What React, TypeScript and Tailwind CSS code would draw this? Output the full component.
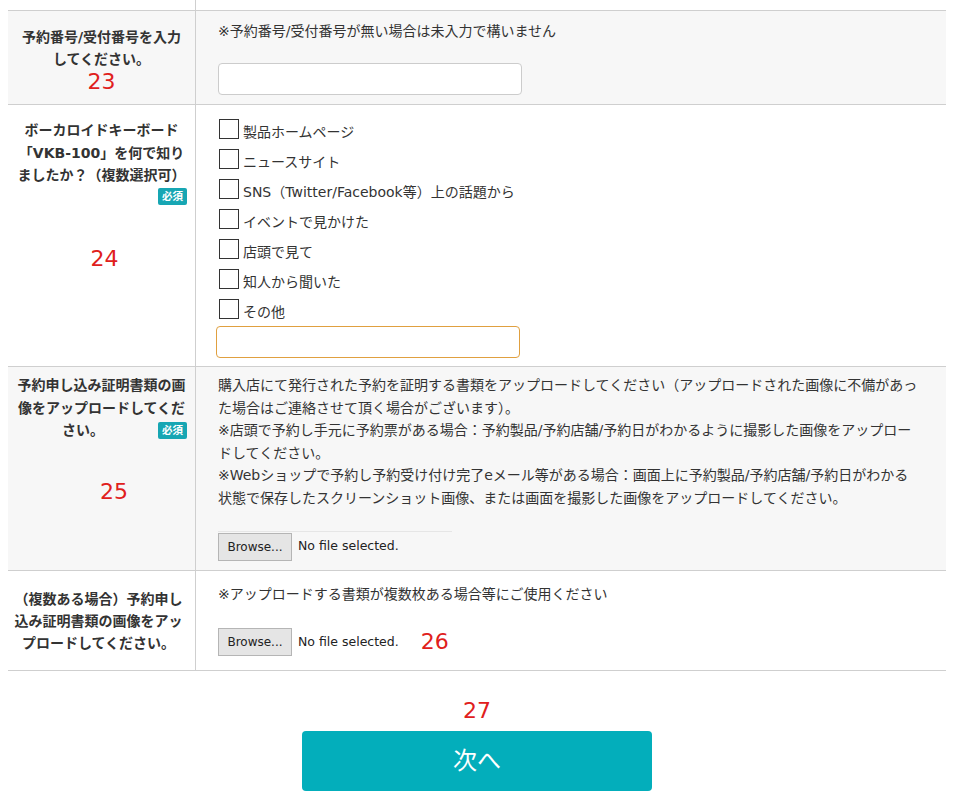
import React from 'react';

const FONT = { fontFamily: '"DejaVu Sans", "Noto Sans CJK JP", sans-serif' };

function Badge() {
  return (
    <span className="inline-block rounded-[2px] bg-[#17a6b3] px-[4px] text-[10.5px] font-bold leading-[17px] text-white">
      必須
    </span>
  );
}

function Num({ n, className = '' }: { n: string; className?: string }) {
  return <div className={`text-[22px] leading-[24px] text-[#e0201c] ${className}`}>{n}</div>;
}

function FileInput({ extra }: { extra?: React.ReactNode }) {
  return (
    <div className="flex items-center gap-[6px] text-[12.5px] text-[#222]">
      <span className="inline-flex h-[28px] w-[74px] items-center justify-center border border-[#b5b5b5] bg-[#e5e5e5] text-[12px] text-[#222]">
        Browse...
      </span>
      <span>No file selected.</span>
      {extra}
    </div>
  );
}

const options = [
  '製品ホームページ',
  'ニュースサイト',
  'SNS（Twitter/Facebook等）上の話題から',
  'イベントで見かけた',
  '店頭で見て',
  '知人から聞いた',
  'その他',
];

export default function App() {
  return (
    <div className="min-h-screen bg-white" style={FONT}>
      <div className="ml-[8px] w-[938px]">
        {/* cut-off row above */}
        <div className="grid h-[11px] grid-cols-[187px_1fr] border-b border-[#cfcfcf]">
          <div />
          <div className="border-l border-[#cfcfcf]" />
        </div>

        {/* 23 */}
        <div className="grid h-[94px] grid-cols-[187px_1fr] border-b border-[#cfcfcf] bg-[#f7f7f7]">
          <div className="flex flex-col items-center pt-[15px] text-center">
            <p className="text-[14px] font-bold leading-[22px] text-[#333]">
              予約番号/受付番号を入力
              <br />
              してください。
            </p>
            <Num n="23" />
          </div>
          <div className="border-l border-[#cfcfcf] pl-[22px] pt-[9px]">
            <p className="text-[14px] leading-[22px] text-[#333]">※予約番号/受付番号が無い場合は未入力で構いません</p>
            <div className="mt-[21px] h-[32px] w-[304px] rounded-[4px] border border-[#cccccc] bg-white" />
          </div>
        </div>

        {/* 24 */}
        <div className="grid h-[262px] grid-cols-[187px_1fr] border-b border-[#cfcfcf] bg-white">
          <div className="flex flex-col pt-[14px]">
            <p className="text-center text-[14px] font-bold leading-[22.5px] text-[#333]">
              ボーカロイドキーボード
              <br />
              「VKB-100」を何で知り
              <br />
              ましたか？（複数選択可）
            </p>
            <div className="flex justify-end pr-[8px] pt-[1px]">
              <Badge />
            </div>
            <Num n="24" className="mt-[42px] pl-[6px] text-center" />
          </div>
          <div className="border-l border-[#cfcfcf] pl-[23px] pt-[14px]">
            <div className="flex flex-col gap-[10px]">
              {options.map((o) => (
                <label key={o} className="flex h-[20px] items-end">
                  <span className="mr-[4px] inline-block h-[20px] w-[20px] border border-[#333] bg-white" />
                  <span className="translate-y-[3px] text-[14px] leading-[20px] text-[#333]">{o}</span>
                </label>
              ))}
            </div>
            <div className="ml-[-3px] mt-[7px] h-[32px] w-[304px] rounded-[4px] border border-[#e0a040] bg-white" />
          </div>
        </div>

        {/* 25 */}
        <div className="grid h-[204px] grid-cols-[187px_1fr] border-b border-[#cfcfcf] bg-[#f7f7f7]">
          <div className="flex flex-col pt-[7px]">
            <p className="text-center text-[14px] font-bold leading-[22.5px] text-[#333]">
              予約申し込み証明書類の画
              <br />
              像をアップロードしてくだ
            </p>
            <div className="flex items-center pr-[8px]">
              <span className="flex-1 text-center text-[14px] font-bold leading-[22.5px] text-[#333]">さい。</span>
              <Badge />
            </div>
            <Num n="25" className="mt-[38px] pl-[25px] text-center" />
          </div>
          <div className="border-l border-[#cfcfcf] pl-[22px] pr-[26px] pt-[7px]">
            <p className="text-[14px] leading-[22.6px] text-[#333]">
              購入店にて発行された予約を証明する書類をアップロードしてください（アップロードされた画像に不備があった場合はご連絡させて頂く場合がございます）。
              <br />
              ※店頭で予約し手元に予約票がある場合：予約製品/予約店舗/予約日がわかるように撮影した画像をアップロードしてください。
              <br />
              ※Webショップで予約し予約受け付け完了eメール等がある場合：画面上に予約製品/予約店舗/予約日がわかる状態で保存したスクリーンショット画像、または画面を撮影した画像をアップロードしてください。
            </p>
            <div className="mt-[21px] w-[234px] border-t border-[#e6e6e6] pt-[1px]">
              <FileInput />
            </div>
          </div>
        </div>

        {/* 26 */}
        <div className="grid h-[100px] grid-cols-[187px_1fr] border-b border-[#cfcfcf] bg-white">
          <div className="pt-[17px] pr-[6px]">
            <p className="text-center text-[14px] font-bold leading-[22px] text-[#333]">
              （複数ある場合）予約申し
              <br />
              込み証明書類の画像をアッ
              <br />
              プロードしてください。
            </p>
          </div>
          <div className="border-l border-[#cfcfcf] pl-[22px] pt-[12px]">
            <p className="text-[14px] leading-[22px] text-[#333]">※アップロードする書類が複数枚ある場合等にご使用ください</p>
            <div className="mt-[23px]">
              <FileInput extra={<Num n="26" className="ml-[16px]" />} />
            </div>
          </div>
        </div>

        {/* 27 */}
        <div className="flex flex-col items-center pt-[28px]">
          <Num n="27" />
          <button className="mt-[8px] h-[60px] w-[350px] rounded-[4px] bg-[#03aebb] text-[24px] text-white">次へ</button>
        </div>
      </div>
    </div>
  );
}
